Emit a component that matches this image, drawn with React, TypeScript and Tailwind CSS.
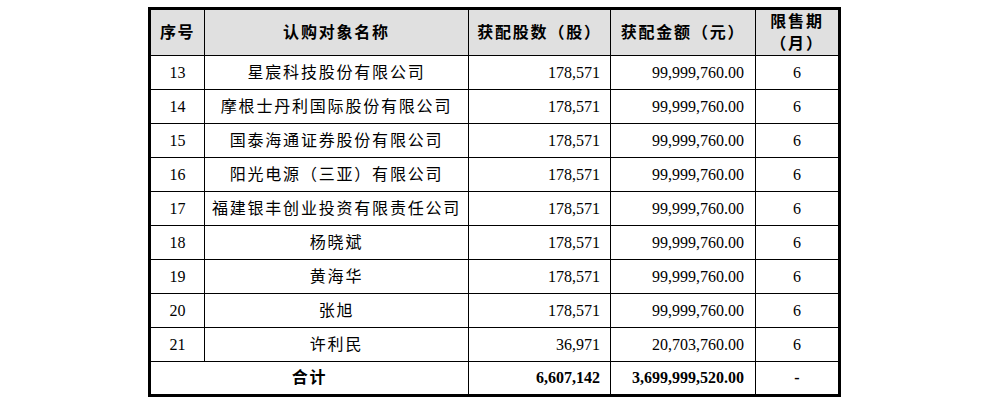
import React from "react";

const rows: [string, string, string, string, string][] = [
  ["13", "星宸科技股份有限公司", "178,571", "99,999,760.00", "6"],
  ["14", "摩根士丹利国际股份有限公司", "178,571", "99,999,760.00", "6"],
  ["15", "国泰海通证券股份有限公司", "178,571", "99,999,760.00", "6"],
  ["16", "阳光电源（三亚）有限公司", "178,571", "99,999,760.00", "6"],
  ["17", "福建银丰创业投资有限责任公司", "178,571", "99,999,760.00", "6"],
  ["18", "杨晓斌", "178,571", "99,999,760.00", "6"],
  ["19", "黄海华", "178,571", "99,999,760.00", "6"],
  ["20", "张旭", "178,571", "99,999,760.00", "6"],
  ["21", "许利民", "36,971", "20,703,760.00", "6"],
];

export default function App() {
  return (
    <div
      className="w-[990px] h-[401px] bg-white pt-[7px] pl-[148px] text-black"
      style={{ fontFamily: "'Liberation Serif', 'Noto Sans CJK SC', serif" }}
    >
      <div className="w-[693px] border-[3px] border-black bg-black">
        <div className="grid grid-cols-[53px_263px_141px_144px_82px] grid-rows-[45px_repeat(9,33px)_32px] gap-px text-[16px]">
          <div className="bg-[#e0e0e0] flex items-center justify-center font-bold tracking-[1.5px]">序号</div>
          <div className="bg-[#e0e0e0] flex items-center justify-center font-bold tracking-[1.8px]">认购对象名称</div>
          <div className="bg-[#e0e0e0] flex items-center justify-center font-bold tracking-[1.8px]">获配股数（股）</div>
          <div className="bg-[#e0e0e0] flex items-center justify-center font-bold tracking-[1.8px]">获配金额（元）</div>
          <div className="bg-[#e0e0e0] flex flex-col items-center justify-center font-bold tracking-[1.8px] leading-[22px]">
            <span>限售期</span>
            <span>（月）</span>
          </div>
          {rows.map((r) => (
            <React.Fragment key={r[0]}>
              <div className="bg-white flex items-center justify-center">{r[0]}</div>
              <div className="bg-white flex items-center justify-center tracking-[1.8px]">{r[1]}</div>
              <div className="bg-white flex items-center justify-end pr-[10px]">{r[2]}</div>
              <div className="bg-white flex items-center justify-end pr-[11px]">{r[3]}</div>
              <div className="bg-white flex items-center justify-center">{r[4]}</div>
            </React.Fragment>
          ))}
          <div className="col-span-2 bg-white flex items-center justify-center font-bold tracking-[1.8px]">合计</div>
          <div className="bg-white flex items-center justify-end pr-[10px] font-bold">6,607,142</div>
          <div className="bg-white flex items-center justify-end pr-[11px] font-bold">3,699,999,520.00</div>
          <div className="bg-white flex items-center justify-center font-bold">-</div>
        </div>
      </div>
    </div>
  );
}
